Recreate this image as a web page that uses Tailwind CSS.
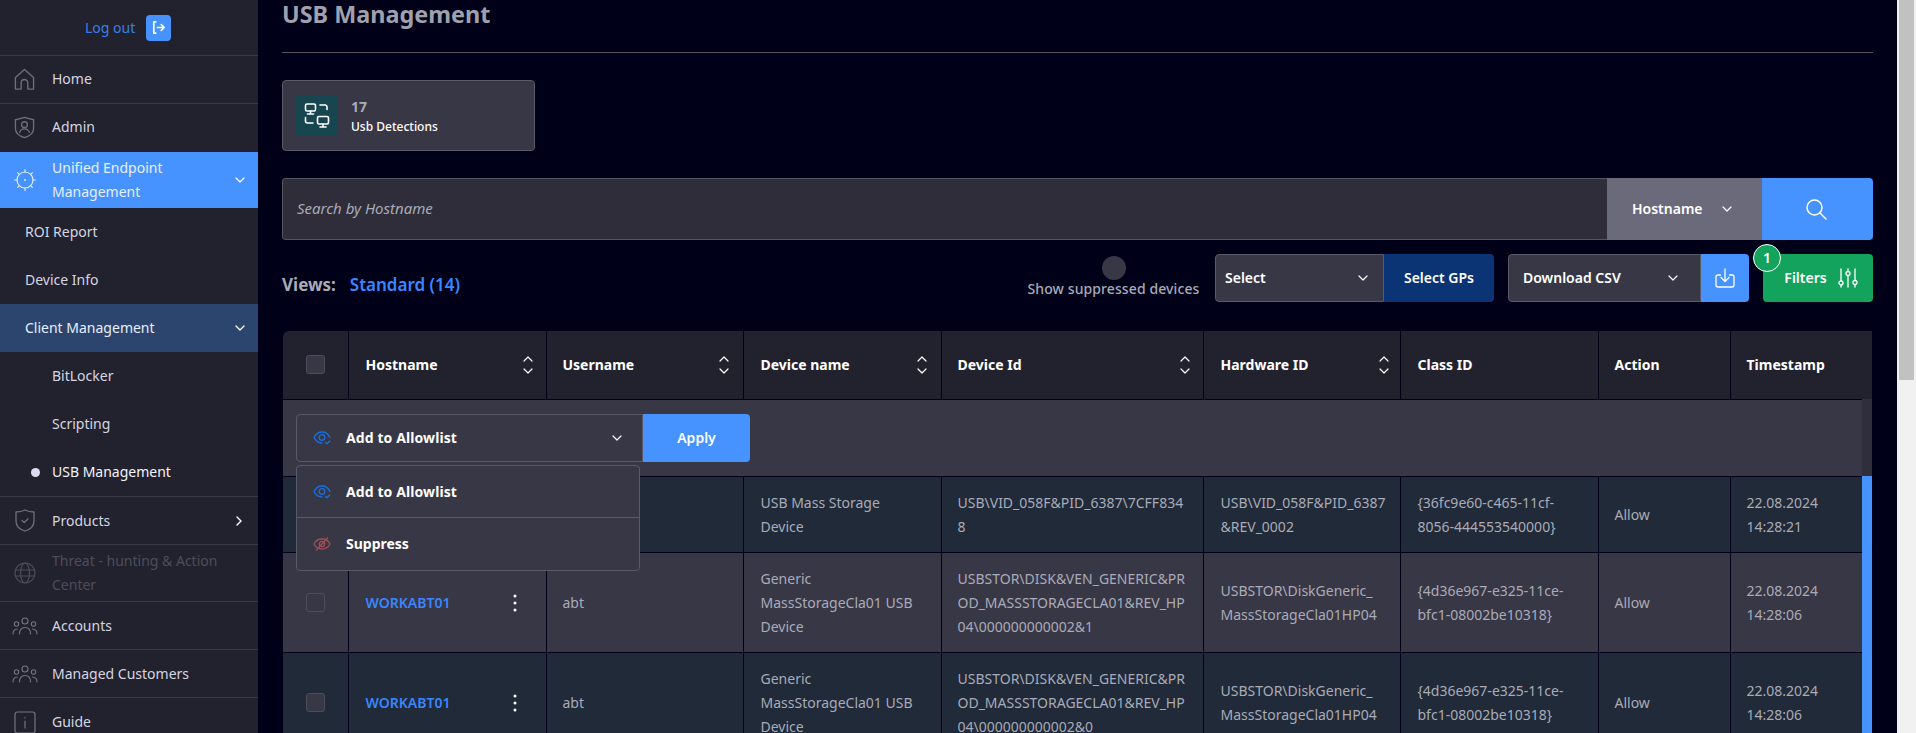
<!DOCTYPE html>
<html lang="en">
<head>
    <meta charset="UTF-8">
    <title>USB Management</title>
    <script src="https://cdn.jsdelivr.net/npm/@tailwindcss/browser@4"></script>
</head>
<body class="h-screen overflow-hidden flex bg-[#000019] font-['Noto_Sans',sans-serif] text-sm">
    <!-- Sidebar -->
    <aside class="w-[258px] shrink-0 bg-[#22222e] text-[#d5d5e2] leading-6 overflow-hidden">
        <div class="h-[56px] flex items-center border-b border-[#3a3a46] pl-[85px] gap-[11px] text-[#3a7fe8]">
            <span>Log out</span>
            <span class="w-[25px] h-[26px] rounded bg-[#4693ff] flex items-center justify-center">
                <svg width="15" height="15" viewBox="0 0 16 16" fill="none" stroke="white" stroke-width="1.800" stroke-linecap="round" stroke-linejoin="round"><path d="M5 2H3v12h2M7 8h7M11 5l3 3-3 3"/></svg>
            </span>
        </div>
        <a class="h-[48px] pb-px flex items-center border-b border-[#3a3a46]">
            <span class="w-[52px] flex justify-center pr-[3px]">
                <svg width="21" height="23" viewBox="0 0 22 24" fill="none" stroke="#6f6f7b" stroke-width="1.400" stroke-linejoin="round"><path d="M1.500 22V10L11 1.500 20.500 10v12h-6v-6.500a3.500 3.500 0 0 0-7 0V22z"/></svg>
            </span>
            <span>Home</span>
        </a>
        <a class="h-[48px] pb-[2px] flex items-center">
            <span class="w-[52px] flex justify-center pr-[3px]">
                <svg width="21" height="23" viewBox="0 0 22 24" fill="none" stroke="#6f6f7b" stroke-width="1.400" stroke-linecap="round"><path d="M11 1.500 20.500 4v9c0 5-4.500 8-9.500 9.500C6 21 1.500 18 1.500 13V4z"/><circle cx="11" cy="9" r="3"/><path d="M6 17c.8-2.500 2.800-3.500 5-3.500s4.200 1 5 3.500"/></svg>
            </span>
            <span>Admin</span>
        </a>
        <a class="h-[56px] flex items-center bg-[#4693ff] text-[#e8eefc]">
            <span class="w-[52px] flex justify-center pr-[2px]">
                <svg width="24" height="24" viewBox="0 0 24 24" fill="none" stroke="#e0e9fa" stroke-width="1.200" stroke-linecap="round"><circle cx="12" cy="12" r="8"/><circle cx="12" cy="12" r="1" fill="#e0e9fa" stroke="none"/><path d="M12 1.500v2.500M12 20v2.500M1.500 12H4M20 12h2.500M4.600 4.600l1.700 1.700M17.700 17.700l1.700 1.700M4.600 19.400l1.700-1.700M17.700 6.300l1.700-1.700"/></svg>
            </span>
            <span class="w-[164px]">Unified Endpoint Management</span>
            <svg class="ml-[19px]" width="10" height="6" viewBox="0 0 10 6" fill="none" stroke="#fff" stroke-width="1.300" stroke-linecap="round" stroke-linejoin="round"><path d="M1 1l4 4 4-4"/></svg>
        </a>
        <a class="h-[48px] flex items-center pl-[25px]">ROI Report</a>
        <a class="h-[48px] flex items-center pl-[25px]">Device Info</a>
        <a class="h-[48px] flex items-center justify-between pl-[25px] pr-[13px] bg-[#2c456f] text-[#e8eefc]">
            <span>Client Management</span>
            <svg width="10" height="6" viewBox="0 0 10 6" fill="none" stroke="#fff" stroke-width="1.300" stroke-linecap="round" stroke-linejoin="round"><path d="M1 1l4 4 4-4"/></svg>
        </a>
        <a class="h-[48px] flex items-center pl-[52px]">BitLocker</a>
        <a class="h-[48px] flex items-center pl-[52px]">Scripting</a>
        <a class="h-[49px] flex items-center pl-[31px] gap-[12px] border-b border-[#3a3a46] text-[#f2f3fb]">
            <span class="w-[9px] h-[9px] rounded-full bg-[#dcdcf0]"></span>
            <span>USB Management</span>
        </a>
        <a class="h-[48px] flex items-center border-b border-[#3a3a46]">
            <span class="w-[52px] flex justify-center pr-[3px]">
                <svg width="20" height="23" viewBox="0 0 20 23" fill="none" stroke="#6f6f7b" stroke-width="1.300" stroke-linecap="round" stroke-linejoin="round"><path d="M10 1C13 2.500 16 3 19 3v9c0 5-4 8.500-9 10C5 20.500 1 17 1 12V3c3 0 6-.5 9-2z"/><path d="M7 11.500l2.200 2L13 10"/></svg>
            </span>
            <span class="w-[184px]">Products</span>
            <svg width="6" height="10" viewBox="0 0 6 10" fill="none" stroke="#fff" stroke-width="1.400" stroke-linecap="round" stroke-linejoin="round"><path d="M1 1l4 4-4 4"/></svg>
        </a>
        <a class="h-[57px] flex items-center border-b border-[#3a3a46] text-[#4d4d5a]">
            <span class="w-[52px] flex justify-center pr-[2px]">
                <svg width="22" height="22" viewBox="0 0 22 22" fill="none" stroke="#4d4d5a" stroke-width="1.200"><circle cx="11" cy="11" r="10"/><ellipse cx="11" cy="11" rx="4.500" ry="10"/><path d="M1.500 8h19M1.500 14h19"/></svg>
            </span>
            <span class="w-[190px]">Threat - hunting &amp; Action Center</span>
        </a>
        <a class="h-[48px] flex items-center border-b border-[#3a3a46]">
            <span class="w-[52px] flex justify-center pr-[2px]">
                <svg width="26" height="18" viewBox="0 0 26 18" fill="none" stroke="#74747f" stroke-width="1.100" stroke-linecap="round"><circle cx="13" cy="4" r="3"/><circle cx="4.500" cy="7" r="2.200"/><circle cx="21.500" cy="7" r="2.200"/><path d="M7.500 17c0-4 2-6.500 5.500-6.500s5.500 2.500 5.500 6.500M1 17c0-3 1.500-5 4.500-5M25 17c0-3-1.500-5-4.500-5"/></svg>
            </span>
            <span>Accounts</span>
        </a>
        <a class="h-[48px] flex items-center border-b border-[#3a3a46]">
            <span class="w-[52px] flex justify-center pr-[2px]">
                <svg width="26" height="18" viewBox="0 0 26 18" fill="none" stroke="#74747f" stroke-width="1.100" stroke-linecap="round"><circle cx="13" cy="4" r="3"/><circle cx="4.500" cy="7" r="2.200"/><circle cx="21.500" cy="7" r="2.200"/><path d="M7.500 17c0-4 2-6.500 5.500-6.500s5.500 2.500 5.500 6.500M1 17c0-3 1.500-5 4.500-5M25 17c0-3-1.500-5-4.500-5"/></svg>
            </span>
            <span>Managed Customers</span>
        </a>
        <a class="h-[48px] flex items-center">
            <span class="w-[52px] flex justify-center pr-[2px]">
                <svg width="22" height="23" viewBox="0 0 22 23" fill="none" stroke="#74747f" stroke-width="1.200" stroke-linecap="round"><rect x="1" y="1" width="20" height="21" rx="2.500"/><path d="M11 10v7M11 6.500v.5"/></svg>
            </span>
            <span>Guide</span>
        </a>
    </aside>

    <!-- Main content -->
    <main class="flex-1 min-w-0 px-[24px]">
        <div class="h-[53px] border-b border-[#55555f]">
            <h1 class="text-[23.400px] leading-7 font-bold text-[#9fa1ac]">USB Management</h1>
        </div>

        <div class="mt-[27px] w-[253px] h-[71px] flex items-center gap-[13px] pl-[13px] bg-[#383746] border border-[#5a5a66] rounded">
            <span class="w-[42px] h-[41px] rounded bg-[#174550] flex items-center justify-center">
                <svg width="26" height="27" viewBox="0 0 26 26" fill="none" stroke="#fff" stroke-width="1.600" stroke-linecap="round" stroke-linejoin="round"><rect x="1.500" y="1.500" width="10" height="7" rx="1.500"/><path d="M6.500 8.500v3M3.500 11.500h6"/><rect x="13.500" y="14" width="11" height="7.500" rx="1.500"/><path d="M19 21.500v3M16 24.500h6"/><path d="M16 2.500h5.500a2 2 0 0 1 1.500 2V7M1.500 15v3.500a2 2 0 0 0 2 2H9"/></svg>
            </span>
            <div class="pt-[2px]">
                <div class="font-bold leading-5 text-[#a9abb8]">17</div>
                <div class="text-xs font-medium leading-5 text-white">Usb Detections</div>
            </div>
        </div>

        <div class="mt-[27px] h-[62px] flex">
            <div class="flex-1 flex items-center pl-[14px] bg-[#2e2d39] border border-[#55555f] border-r-0 rounded-l italic text-[15px] text-[#a9abb8]">Search by Hostname</div>
            <div class="w-[155px] bg-[#6b6a7a] flex items-center pl-[25px] gap-[19px] font-semibold text-white">
                <span>Hostname</span>
                <svg width="10" height="6" viewBox="0 0 10 6" fill="none" stroke="#fff" stroke-width="1.200" stroke-linecap="round" stroke-linejoin="round"><path d="M1 1l4 4 4-4"/></svg>
            </div>
            <div class="w-[111px] bg-[#4693ff] rounded-r flex items-center justify-center pr-[2px]">
                <svg width="21" height="21" viewBox="0 0 21 21" fill="none" stroke="#fff" stroke-width="1.500" stroke-linecap="round"><circle cx="8.500" cy="8.500" r="7.500"/><path d="M14 14l6 6"/></svg>
            </div>
        </div>

        <div class="mt-[14px] h-[48px] flex items-center">
            <span class="text-[17px] font-bold text-[#a9abb8] mt-[14px]">Views:</span>
            <span class="ml-[14px] text-[17px] font-semibold text-[#3a86ff] mt-[14px]">Standard (14)</span>
            <div class="ml-auto w-[173px] flex flex-col items-center -mt-px">
                <span class="w-[24px] h-[24px] rounded-full bg-[#383746]"></span>
                <span class="-mt-px font-medium leading-5 tracking-[0.1px] whitespace-nowrap text-[#a9abb8]">Show suppressed devices</span>
            </div>
            <div class="ml-[15px] flex h-full font-semibold text-white">
                <div class="w-[169px] flex items-center justify-between pl-[9px] pr-[15px] bg-[#383746] border border-[#5a5a66] rounded-l">
                    <span>Select</span>
                    <svg width="10" height="6" viewBox="0 0 10 6" fill="none" stroke="#fff" stroke-width="1.200" stroke-linecap="round" stroke-linejoin="round"><path d="M1 1l4 4 4-4"/></svg>
                </div>
                <div class="w-[110px] flex items-center justify-center bg-[#0a3474] rounded-r">Select GPs</div>
            </div>
            <div class="ml-[14px] flex h-full font-semibold text-white">
                <div class="w-[193px] flex items-center justify-between pl-[14px] pr-[22px] bg-[#383746] border border-[#5a5a66] rounded-l">
                    <span>Download CSV</span>
                    <svg width="10" height="6" viewBox="0 0 10 6" fill="none" stroke="#fff" stroke-width="1.200" stroke-linecap="round" stroke-linejoin="round"><path d="M1 1l4 4 4-4"/></svg>
                </div>
                <div class="w-[48px] flex items-center justify-center bg-[#4693ff] rounded-r">
                    <svg width="20" height="20" viewBox="0 0 20 20" fill="none" stroke="#fff" stroke-width="1.300" stroke-linecap="round" stroke-linejoin="round"><path d="M5.500 7H3a2 2 0 0 0-2 2v8a2 2 0 0 0 2 2h14a2 2 0 0 0 2-2V9a2 2 0 0 0-2-2h-2.500"/><path d="M10 1v12M6 9.500l4 4 4-4"/></svg>
                </div>
            </div>
            <div class="relative ml-[14px] w-[110px] h-full flex items-center justify-center gap-[11px] bg-[#13a35c] rounded font-semibold text-white pl-[6px]">
                <span class="absolute -left-[10px] -top-[10px] w-[28px] h-[28px] rounded-full bg-[#13a35c] border border-white flex items-center justify-center text-sm font-semibold">1</span>
                <span>Filters</span>
                <svg width="20" height="20" viewBox="0 0 20 20" fill="none" stroke="#fff" stroke-width="1.300" stroke-linecap="round"><path d="M3 1v12M3 17.500V19M10 1v2M10 8v11M17 1v11M17 16.500V19"/><circle cx="3" cy="15" r="2"/><circle cx="10" cy="5.500" r="2"/><circle cx="17" cy="14.500" r="2"/></svg>
            </div>
        </div>

        <!-- Table -->
        <div class="relative mt-[29px] ml-px w-[1589px]">
            <table class="w-[1589px] table-fixed border-collapse leading-6 text-[#a9abb8]">
                <colgroup>
                    <col class="w-[65px]">
                    <col class="w-[198px]">
                    <col class="w-[197px]">
                    <col class="w-[198px]">
                    <col class="w-[262px]">
                    <col class="w-[197px]">
                    <col class="w-[198px]">
                    <col class="w-[132px]">
                    <col class="w-[142px]">
                </colgroup>
                <thead>
                    <tr class="h-[68px] bg-[#22222e] text-left text-white font-bold">
                        <th class="rounded-tl-md pl-[23px]"><span class="block w-[19px] h-[19px] rounded-[3px] bg-[#383746] border border-[#4e4e5a]"></span></th>
                        <th class="border-l border-[#000019] pl-[17px] pr-[13px]"><span class="flex items-center justify-between">Hostname
                            <svg width="10" height="18" viewBox="0 0 10 18" fill="none" stroke="#fff" stroke-width="1.200" stroke-linecap="round" stroke-linejoin="round"><path d="M1 5l4-4 4 4M1 13l4 4 4-4"/></svg></span></th>
                        <th class="border-l border-[#000019] pl-[16px] pr-[14px]"><span class="flex items-center justify-between">Username
                            <svg width="10" height="18" viewBox="0 0 10 18" fill="none" stroke="#fff" stroke-width="1.200" stroke-linecap="round" stroke-linejoin="round"><path d="M1 5l4-4 4 4M1 13l4 4 4-4"/></svg></span></th>
                        <th class="border-l border-[#000019] pl-[17px] pr-[14px]"><span class="flex items-center justify-between">Device name
                            <svg width="10" height="18" viewBox="0 0 10 18" fill="none" stroke="#fff" stroke-width="1.200" stroke-linecap="round" stroke-linejoin="round"><path d="M1 5l4-4 4 4M1 13l4 4 4-4"/></svg></span></th>
                        <th class="border-l border-[#000019] pl-[16px] pr-[13px]"><span class="flex items-center justify-between">Device Id
                            <svg width="10" height="18" viewBox="0 0 10 18" fill="none" stroke="#fff" stroke-width="1.200" stroke-linecap="round" stroke-linejoin="round"><path d="M1 5l4-4 4 4M1 13l4 4 4-4"/></svg></span></th>
                        <th class="border-l border-[#000019] pl-[17px] pr-[11px]"><span class="flex items-center justify-between">Hardware ID
                            <svg width="10" height="18" viewBox="0 0 10 18" fill="none" stroke="#fff" stroke-width="1.200" stroke-linecap="round" stroke-linejoin="round"><path d="M1 5l4-4 4 4M1 13l4 4 4-4"/></svg></span></th>
                        <th class="border-l border-[#000019] pl-[17px]">Class ID</th>
                        <th class="border-l border-[#000019] pl-[16px]">Action</th>
                        <th class="border-l border-[#000019] pl-[16px]">Timestamp</th>
                    </tr>
                </thead>
                <tbody>
                    <tr class="h-[77px] bg-[#383746] border-y border-[#000019]">
                        <td colspan="9" class="pl-[13px]">
                            <div class="relative flex w-[454px] h-[48px] font-bold text-white">
                                <div class="w-[347px] flex items-center pl-[16px] bg-[#383746] border border-[#5a5a66] rounded-l">
                                    <svg width="18" height="14" viewBox="0 0 18 14" fill="none" stroke="#1a6fe0" stroke-width="1.300" stroke-linecap="round" stroke-linejoin="round"><path d="M9 12C5 12 2.500 9.500 1 6.500 2.500 3.500 5 1 9 1s6.500 2.500 8 5.500"/><circle cx="9" cy="6.500" r="2.800"/><path d="M12.500 11.500l1.500 1.300 2.800-2.800"/></svg>
                                    <span class="ml-[15px] tracking-[0.1px]">Add to Allowlist</span>
                                    <svg class="ml-auto mr-[20px]" width="10" height="6" viewBox="0 0 10 6" fill="none" stroke="#fff" stroke-width="1.200" stroke-linecap="round" stroke-linejoin="round"><path d="M1 1l4 4 4-4"/></svg>
                                </div>
                                <div class="w-[107px] flex items-center justify-center bg-[#4693ff] rounded-r font-semibold">Apply</div>
                                <!-- open dropdown menu -->
                                <div class="absolute left-0 top-[51px] w-[344px] bg-[#383746] border border-[#5a5a66] rounded z-10">
                                    <div class="h-[52px] pt-[2px] flex items-center pl-[16px] border-b border-[#5a5a66]">
                                        <svg width="18" height="14" viewBox="0 0 18 14" fill="none" stroke="#1a6fe0" stroke-width="1.300" stroke-linecap="round" stroke-linejoin="round"><path d="M9 12C5 12 2.500 9.500 1 6.500 2.500 3.500 5 1 9 1s6.500 2.500 8 5.500"/><circle cx="9" cy="6.500" r="2.800"/><path d="M12.500 11.500l1.500 1.300 2.800-2.800"/></svg>
                                        <span class="ml-[15px] tracking-[0.1px]">Add to Allowlist</span>
                                    </div>
                                    <div class="h-[52px] flex items-center pl-[16px]">
                                        <svg width="18" height="14" viewBox="0 0 18 14" fill="none" stroke="#a04f55" stroke-width="1.300" stroke-linecap="round" stroke-linejoin="round"><path d="M1 7C2.500 4 5 2 9 2s6.500 2 8 5c-1.500 3-4 5-8 5S2.500 10 1 7z"/><circle cx="9" cy="7" r="2.600"/><path d="M14.500 1L3.500 13"/></svg>
                                        <span class="ml-[15px]">Suppress</span>
                                    </div>
                                </div>
                            </div>
                        </td>
                    </tr>
                    <tr class="h-[76px] bg-[#202a38] border-b border-[#000019] [&>td]:pt-px">
                        <td class="pl-[23px]"></td>
                        <td class="border-l border-[#000019] pl-[17px] font-semibold text-[#3a86ff]">WORKABT01</td>
                        <td class="border-l border-[#000019] pl-[16px]">abt</td>
                        <td class="border-l border-[#000019] px-[17px]">USB Mass Storage Device</td>
                        <td class="border-l border-[#000019] pl-[16px] pr-[14px] break-all">USB\VID_058F&amp;PID_6387\7CFF8348</td>
                        <td class="border-l border-[#000019] pl-[17px] pr-[8px]">USB\VID_058F&amp;PID_6387<br>&amp;REV_0002</td>
                        <td class="border-l border-[#000019] px-[17px]">{36fc9e60-c465-11cf-8056-444553540000}</td>
                        <td class="border-l border-[#000019] pl-[16px]">Allow</td>
                        <td class="border-l border-[#000019] pl-[16px] pr-[30px]">22.08.2024 14:28:21</td>
                    </tr>
                    <tr class="h-[100px] bg-[#383746] border-b border-[#000019] [&>td]:pt-px">
                        <td class="pl-[23px]"><span class="block w-[19px] h-[19px] rounded-[3px] border border-[#4e4e5a]"></span></td>
                        <td class="border-l border-[#000019] pl-[17px] pr-[29px] font-semibold text-[#3a86ff]">
                            <span class="flex items-center justify-between">WORKABT01
                                <svg width="4" height="18" viewBox="0 0 4 18" fill="#fff"><circle cx="2" cy="2" r="1.500"/><circle cx="2" cy="9" r="1.500"/><circle cx="2" cy="16" r="1.500"/></svg>
                            </span>
                        </td>
                        <td class="border-l border-[#000019] pl-[16px]">abt</td>
                        <td class="border-l border-[#000019] px-[17px]">Generic MassStorageCla01 USB Device</td>
                        <td class="border-l border-[#000019] pl-[16px] pr-[14px] break-all">USBSTOR\DISK&amp;VEN_GENERIC&amp;PROD_MASSSTORAGECLA01&amp;REV_HP04\000000000002&amp;1</td>
                        <td class="border-l border-[#000019] pl-[17px] pr-[8px]">USBSTOR\DiskGeneric_<br>MassStorageCla01HP04</td>
                        <td class="border-l border-[#000019] px-[17px]">{4d36e967-e325-11ce-bfc1-08002be10318}</td>
                        <td class="border-l border-[#000019] pl-[16px]">Allow</td>
                        <td class="border-l border-[#000019] pl-[16px] pr-[30px]">22.08.2024 14:28:06</td>
                    </tr>
                    <tr class="h-[100px] bg-[#202a38] [&>td]:pt-px">
                        <td class="pl-[23px]"><span class="block w-[19px] h-[19px] rounded-[3px] bg-[#383746] border border-[#4e4e5a]"></span></td>
                        <td class="border-l border-[#000019] pl-[17px] pr-[29px] font-semibold text-[#3a86ff]">
                            <span class="flex items-center justify-between">WORKABT01
                                <svg width="4" height="18" viewBox="0 0 4 18" fill="#fff"><circle cx="2" cy="2" r="1.500"/><circle cx="2" cy="9" r="1.500"/><circle cx="2" cy="16" r="1.500"/></svg>
                            </span>
                        </td>
                        <td class="border-l border-[#000019] pl-[16px]">abt</td>
                        <td class="border-l border-[#000019] px-[17px]">Generic MassStorageCla01 USB Device</td>
                        <td class="border-l border-[#000019] pl-[16px] pr-[14px] break-all">USBSTOR\DISK&amp;VEN_GENERIC&amp;PROD_MASSSTORAGECLA01&amp;REV_HP04\000000000002&amp;0</td>
                        <td class="border-l border-[#000019] pl-[17px] pr-[8px]">USBSTOR\DiskGeneric_<br>MassStorageCla01HP04</td>
                        <td class="border-l border-[#000019] px-[17px]">{4d36e967-e325-11ce-bfc1-08002be10318}</td>
                        <td class="border-l border-[#000019] pl-[16px]">Allow</td>
                        <td class="border-l border-[#000019] pl-[16px] pr-[30px]">22.08.2024 14:28:06</td>
                    </tr>
                </tbody>
            </table>
            <!-- table body scrollbar -->
            <div class="absolute right-0 top-[68px] bottom-0 w-[10px] bg-[#2f2f3c]">
                <div class="mt-[77px] h-[300px] bg-[#4693ff]"></div>
            </div>
        </div>
    </main>

    <!-- Page scrollbar -->
    <div class="w-[19px] shrink-0 bg-[#f1f1f1] pl-[2px] pr-[2px]">
        <div class="h-[380px] bg-[#c1c1c1]"></div>
    </div>
</body>
</html>
